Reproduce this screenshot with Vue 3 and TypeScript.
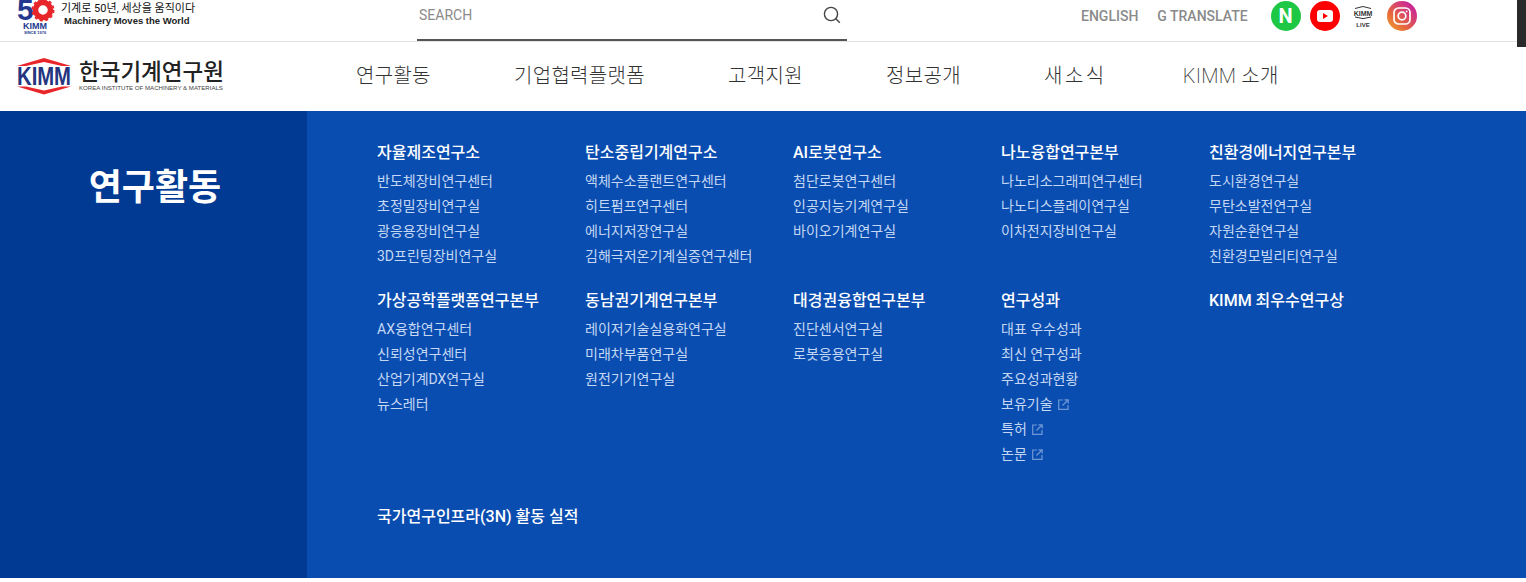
<script setup lang="ts">
interface MenuLink {
  label: string
  external?: boolean
}
interface MenuGroup {
  title: string
  links: MenuLink[]
}

const navItems = ['연구활동', '기업협력플랫폼', '고객지원', '정보공개', '새소식', 'KIMM 소개']

const toLinks = (labels: string[]): MenuLink[] => labels.map((label) => ({ label }))

const firstRow: MenuGroup[] = [
  { title: '자율제조연구소', links: toLinks(['반도체장비연구센터', '초정밀장비연구실', '광응용장비연구실', '3D프린팅장비연구실']) },
  { title: '탄소중립기계연구소', links: toLinks(['액체수소플랜트연구센터', '히트펌프연구센터', '에너지저장연구실', '김해극저온기계실증연구센터']) },
  { title: 'AI로봇연구소', links: toLinks(['첨단로봇연구센터', '인공지능기계연구실', '바이오기계연구실']) },
  { title: '나노융합연구본부', links: toLinks(['나노리소그래피연구센터', '나노디스플레이연구실', '이차전지장비연구실']) },
  { title: '친환경에너지연구본부', links: toLinks(['도시환경연구실', '무탄소발전연구실', '자원순환연구실', '친환경모빌리티연구실']) },
]

const secondRow: MenuGroup[] = [
  { title: '가상공학플랫폼연구본부', links: toLinks(['AX융합연구센터', '신뢰성연구센터', '산업기계DX연구실', '뉴스레터']) },
  { title: '동남권기계연구본부', links: toLinks(['레이저기술실용화연구실', '미래차부품연구실', '원전기기연구실']) },
  { title: '대경권융합연구본부', links: toLinks(['진단센서연구실', '로봇응용연구실']) },
  {
    title: '연구성과',
    links: [
      ...toLinks(['대표 우수성과', '최신 연구성과', '주요성과현황']),
      { label: '보유기술', external: true },
      { label: '특허', external: true },
      { label: '논문', external: true },
    ],
  },
  { title: 'KIMM 최우수연구상', links: [] },
]

const rows = [firstRow, secondRow]
</script>

<template>
  <div class="page">
    <header class="top-bar">
      <a class="anniversary">
        <svg class="anniversary-mark" width="40" height="36" viewBox="0 0 40 36">
          <text x="2" y="22" class="mark-five">5</text>
          <circle cx="28" cy="12" r="7.5" fill="none" stroke="#e8262a" stroke-width="5.5" />
          <circle cx="28" cy="12" r="10.6" fill="none" stroke="#e8262a" stroke-width="1.8" stroke-dasharray="3 2.6" />
          <text x="20" y="31" text-anchor="middle" class="mark-kimm">KIMM</text>
          <text x="20" y="36" text-anchor="middle" class="mark-since">SINCE 1976</text>
        </svg>
        <span class="slogan">
          <span class="slogan-ko">기계로 50년, 세상을 움직이다</span>
          <span class="slogan-en">Machinery Moves the World</span>
        </span>
      </a>
      <div class="search">
        <span class="search-text">SEARCH</span>
        <svg width="20" height="20" viewBox="0 0 20 20" fill="none" stroke="#444" stroke-width="1.4">
          <circle cx="9" cy="9" r="6.6" />
          <path d="M13.8 13.8l4 4" />
        </svg>
      </div>
      <div class="utility">
        <a class="utility-link">ENGLISH</a>
        <a class="utility-link">G TRANSLATE</a>
        <div class="social">
          <span class="social-icon naver">N</span>
          <span class="social-icon youtube">
            <svg width="16" height="12" viewBox="0 0 16 12">
              <rect width="16" height="12" rx="3" fill="#fff" />
              <path d="M6 3l5 3-5 3z" fill="#f00" />
            </svg>
          </span>
          <span class="social-icon live">
            <svg width="20" height="26" viewBox="0 0 20 26">
              <path d="M2 5.5L10 3.5l8 2" fill="none" stroke="#333" stroke-width="1" />
              <text x="10" y="12.5" text-anchor="middle" class="live-kimm">KIMM</text>
              <path d="M2 14l8 1.6 8-1.6" fill="none" stroke="#333" stroke-width="1" />
              <text x="10" y="24" text-anchor="middle" class="live-text">LIVE</text>
            </svg>
          </span>
          <span class="social-icon instagram">
            <svg width="18" height="18" viewBox="0 0 18 18" fill="none" stroke="#fff" stroke-width="1.7">
              <rect x="1" y="1" width="16" height="16" rx="4.5" />
              <circle cx="9" cy="9" r="3.8" />
              <circle cx="13.6" cy="4.4" r="0.9" fill="#fff" stroke="none" />
            </svg>
          </span>
        </div>
      </div>
      <div class="corner-shadow"></div>
    </header>

    <nav class="main-nav">
      <a class="brand">
        <svg class="brand-mark" width="56" height="38" viewBox="-1 0 56 38">
          <path d="M0 9L27 1l27 8h-9L27 5 9 9z" fill="#e8262a" />
          <text x="27" y="28" text-anchor="middle" textLength="54" lengthAdjust="spacingAndGlyphs" class="brand-kimm">KIMM</text>
          <path d="M0 29.5L27 37.5l27-8h-9L27 33.5 9 29.5z" fill="#e8262a" />
        </svg>
        <span class="brand-text">
          <span class="brand-ko">한국기계연구원</span>
          <span class="brand-en">KOREA INSTITUTE OF MACHINERY &amp; MATERIALS</span>
        </span>
      </a>
      <ul class="nav-list">
        <li v-for="item in navItems" :key="item" class="nav-item">{{ item }}</li>
      </ul>
    </nav>

    <section class="mega-menu">
      <aside class="menu-side">
        <h2 class="menu-heading">연구활동</h2>
      </aside>
      <div class="menu-body">
        <div v-for="(row, i) in rows" :key="i" class="menu-row">
          <div v-for="group in row" :key="group.title" class="menu-group">
            <h3 class="group-title">{{ group.title }}</h3>
            <ul class="group-links">
              <li v-for="link in group.links" :key="link.label" class="group-link">
                {{ link.label }}
                <svg v-if="link.external" class="external" width="11" height="11" viewBox="0 0 11 11" fill="none" stroke="#6f97d6" stroke-width="1.2">
                  <path d="M5 1H.7v9.3H10V6" />
                  <path d="M4.5 6.5L10 1M6.5 .8h3.7v3.7" />
                </svg>
              </li>
            </ul>
          </div>
        </div>
        <h3 class="group-title infra">국가연구인프라(3N) 활동 실적</h3>
      </div>
    </section>
  </div>
</template>

<style scoped>
.page {
  width: 1526px;
  height: 582px;
  overflow: hidden;
  background: #fff;
  font-family: Roboto, "Noto Sans CJK KR", sans-serif;
}

.top-bar {
  position: relative;
  display: flex;
  align-items: flex-start;
  height: 41px;
  border-bottom: 1px solid #e3e3e3;
}

.anniversary {
  display: flex;
  width: 417px;
  padding-left: 15px;
  box-sizing: border-box;
  gap: 6px;
}

.anniversary-mark {
  margin-top: -2px;
}

.mark-five {
  font: 700 30px "Liberation Sans", sans-serif;
  fill: #24388f;
}

.mark-kimm {
  font: 700 9px "Liberation Sans", sans-serif;
  fill: #24388f;
}

.mark-since {
  font: 700 4px "Liberation Sans", sans-serif;
  fill: #24388f;
}

.slogan {
  display: flex;
  flex-direction: column;
  align-items: flex-start;
}

.slogan-ko {
  font-size: 11px;
  line-height: 15px;
  color: #111;
  margin-top: 1px;
  white-space: nowrap;
}

.slogan-en {
  font-family: "Liberation Sans", sans-serif;
  font-size: 9.5px;
  font-weight: 700;
  line-height: 12px;
  color: #222;
  padding-left: 3px;
  margin-top: -1px;
  white-space: nowrap;
}

.search {
  display: flex;
  align-items: center;
  justify-content: space-between;
  width: 430px;
  height: 41px;
  box-sizing: border-box;
  padding: 0 5px 9px 2px;
  border-bottom: 2px solid #555;
}

.search-text {
  font-size: 14px;
  color: #8a8a8a;
}

.utility {
  display: flex;
  align-items: center;
  margin-left: 234px;
  height: 32px;
  gap: 19px;
}

.utility-link {
  font-size: 14px;
  font-weight: 500;
  color: #8a8a8a;
}

.social {
  display: flex;
  align-items: center;
  margin-left: 4px;
  gap: 9px;
}

.social-icon {
  display: flex;
  align-items: center;
  justify-content: center;
  width: 30px;
  height: 30px;
  border-radius: 50%;
}

.naver {
  background: #1ec744;
  color: #fff;
  font-size: 20px;
  font-weight: 700;
}

.youtube {
  background: #f00;
}

.live {
  width: 29px;
}

.live-kimm {
  font: 700 7px "Liberation Sans", sans-serif;
  fill: #333;
}

.live-text {
  font: 700 6px "Liberation Sans", sans-serif;
  fill: #333;
}

.instagram {
  background: linear-gradient(45deg, #f09433 10%, #e6683c 35%, #cc2b8f 80%, #bc1888 100%);
}

.corner-shadow {
  position: absolute;
  top: 0;
  right: 0;
  width: 9px;
  height: 47px;
  background: #2a2a2a;
}

.main-nav {
  display: flex;
  align-items: center;
  height: 69px;
  padding-left: 16px;
}

.brand {
  display: flex;
  align-items: center;
  gap: 7px;
  width: 298px;
}

.brand-mark {
  margin-top: -2px;
}

.brand-text {
  display: flex;
  flex-direction: column;
  margin-top: -2px;
}

.brand-ko {
  font-size: 22.5px;
  font-weight: 500;
  line-height: 24px;
  color: #222;
  white-space: nowrap;
}

.brand-en {
  font-family: "Liberation Sans", sans-serif;
  font-size: 6.1px;
  line-height: 8px;
  color: #444;
  white-space: nowrap;
}

.brand-kimm {
  font: 700 25px "Liberation Sans", sans-serif;
  fill: #25357f;
}

.nav-list {
  display: flex;
  list-style: none;
  margin: -4px 0 0 42px;
  padding: 0;
  gap: 83.2px;
}

.nav-item {
  font-size: 20px;
  font-weight: 200;
  letter-spacing: 0.3px;
  color: #333;
  white-space: nowrap;
}

.nav-item:nth-child(5) {
  letter-spacing: 2.4px;
  margin-right: -7px;
}

.mega-menu {
  display: flex;
  height: 467px;
  color: #fff;
}

.menu-side {
  width: 307px;
  flex: none;
  background: #003a92;
  text-align: center;
  padding-left: 3px;
  box-sizing: border-box;
}

.menu-heading {
  margin: 52px 0 0;
  font-size: 36px;
  font-weight: 700;
  line-height: 50px;
}

.menu-body {
  flex: 1;
  background: #0a4db0;
  padding: 30px 0 0 70px;
}

.menu-row {
  display: grid;
  grid-template-columns: repeat(5, 208px);
  margin-bottom: 20px;
}

.group-title {
  margin: 0;
  font-size: 16px;
  font-weight: 500;
  line-height: 24px;
  color: #fff;
}

.group-links {
  list-style: none;
  margin: 4px 0 0;
  padding: 0;
}

.group-link {
  font-size: 14px;
  line-height: 25px;
  color: #c4d8f4;
}

.external {
  margin-left: 2px;
  vertical-align: -1px;
}

.infra {
  margin-top: 38px;
}
</style>

<style>
html,
body {
  margin: 0;
  background: #fff;
}
</style>
